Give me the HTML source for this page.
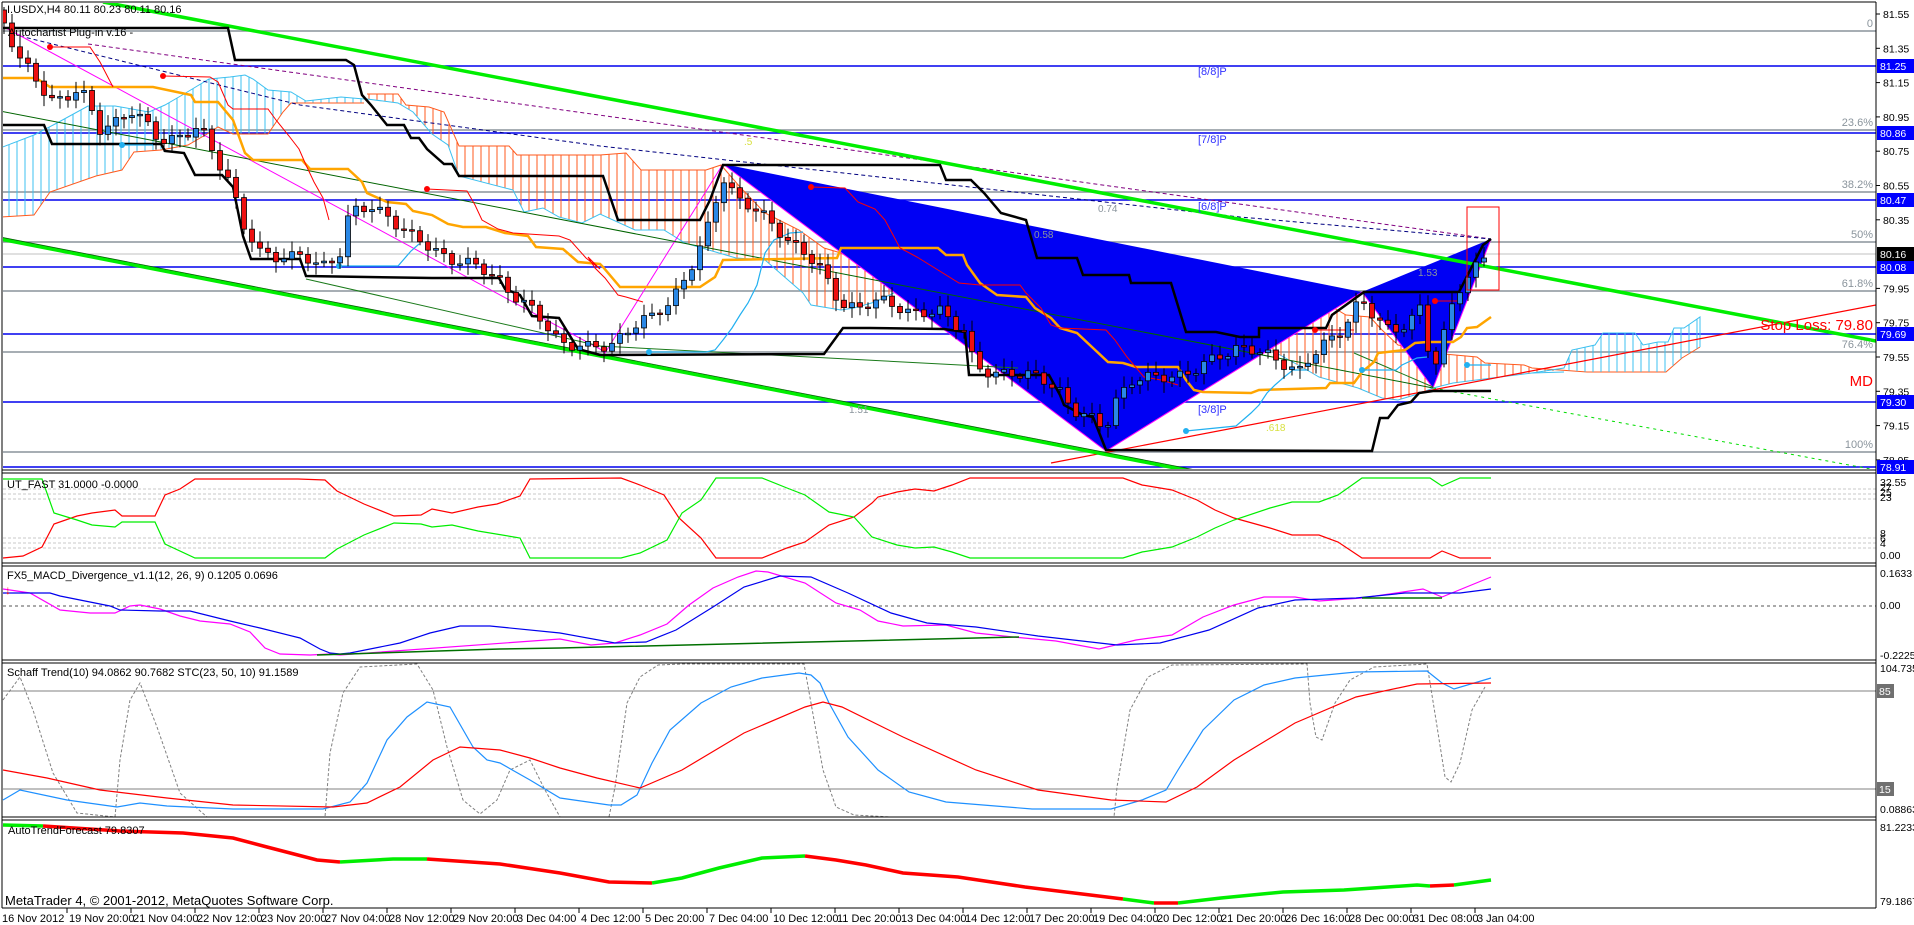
<!DOCTYPE html>
<html><head><meta charset="utf-8"><style>
html,body{margin:0;padding:0;background:#fff;}
svg{display:block;font-family:"Liberation Sans",sans-serif;}
</style></head><body>
<svg id="c" width="1914" height="925" viewBox="0 0 1914 925" xmlns="http://www.w3.org/2000/svg">
<defs>
<pattern id="ho" width="8" height="8" patternUnits="userSpaceOnUse"><line x1="1" y1="0" x2="1" y2="8" stroke="#ff5a1e" stroke-width="1"/></pattern>
<pattern id="hc" width="8" height="8" patternUnits="userSpaceOnUse"><line x1="1" y1="0" x2="1" y2="8" stroke="#3cc0f0" stroke-width="1"/></pattern>
<clipPath id="main"><rect x="3" y="3" width="1873" height="466"/></clipPath>
</defs>
<rect width="1914" height="925" fill="#fff"/>
<g clip-path="url(#main)">
<g stroke="#8a949c" stroke-width="1.5">
<line x1="3" y1="31" x2="1876" y2="31"/><line x1="3" y1="130" x2="1876" y2="130"/><line x1="3" y1="192" x2="1876" y2="192"/><line x1="3" y1="242" x2="1876" y2="242"/><line x1="3" y1="291" x2="1876" y2="291"/><line x1="3" y1="352" x2="1876" y2="352"/><line x1="3" y1="452" x2="1876" y2="452"/>
</g>
<line x1="3" y1="254" x2="1876" y2="254" stroke="#c0c0c0" stroke-width="1"/>
<g stroke="#0000ee" stroke-width="1.5">
<line x1="3" y1="66" x2="1876" y2="66"/><line x1="3" y1="133" x2="1876" y2="133"/><line x1="3" y1="200" x2="1876" y2="200"/><line x1="3" y1="267" x2="1876" y2="267"/><line x1="3" y1="334" x2="1876" y2="334"/><line x1="3" y1="402" x2="1876" y2="402"/><line x1="3" y1="467" x2="1876" y2="467"/>
</g>
<polygon fill="url(#hc)" stroke="none" points="0,148 34,135 57,123 88,106 115,106 149,112 165,105 184,94 209,79 230,77 245,75 253,79 268,90 291,92 306,101 341,97 364,99 364,103 291,103 283,112 268,134 233,134 218,127 207,134 188,145 161,150 134,152 122,170 96,176 50,192 34,215 0,217"/>
<polyline fill="none" stroke="#3cc0f0" stroke-width="1" points="0,148 34,135 57,123 88,106 115,106 149,112 165,105 184,94 209,79 230,77 245,75 253,79 268,90 291,92 306,101 341,97 364,99"/>
<polyline fill="none" stroke="#ff5a1e" stroke-width="1" points="0,217 34,215 50,192 96,176 122,170 134,152 161,150 188,145 207,134 218,127 233,134 268,134 283,112 291,103 364,103"/>
<polygon fill="url(#ho)" points="367,94 398,94 406,105 429,107 444,112 459,146 509,146 517,155 600,155 626,153 641,170 706,170 721,165 740,187 765,213 799,230 824,248 841,253 854,260 866,267 925,267 900,290 875,302 854,308 841,310 811,305 803,293 765,260 736,258 685,243 664,230 635,230 600,214 582,223 559,217 543,208 524,212 513,190 459,176 448,145 432,134 413,112 398,103 367,99"/>
<polyline fill="none" stroke="#ff5a1e" stroke-width="1" points="367,94 398,94 406,105 429,107 444,112 459,146 509,146 517,155 600,155 626,153 641,170 706,170 721,165 740,187 765,213 799,230 824,248 841,253 854,260 866,267 925,267"/>
<polyline fill="none" stroke="#3cc0f0" stroke-width="1" points="367,99 398,103 413,112 432,134 448,145 459,176 513,190 524,212 543,208 559,217 582,223 600,214 635,230 664,230 685,243 736,258 765,260 803,293 811,305 841,310 854,308 875,302 900,290 929,260"/>
<polygon fill="url(#hc)" points="929,260 950,240 959,233 984,230 1001,230 1026,240 1051,247 1068,248 1081,258 1081,260 929,260"/>
<polyline fill="none" stroke="#3cc0f0" stroke-width="1" points="929,260 950,240 959,233 984,230 1001,230 1026,240 1051,247 1068,248 1081,258 1093,267 1127,277 1169,283 1180,307 1190,313 1220,317 1240,327 1251,333 1263,343 1271,350 1307,370 1319,377 1358,388 1382,398 1398,400 1421,393 1433,388 1453,383 1492,378 1532,373 1564,372"/>
<polygon fill="url(#ho)" points="1081,260 1171,260 1180,272 1259,272 1275,287 1299,290 1315,308 1334,308 1346,315 1370,317 1382,330 1398,345 1410,347 1433,353 1477,357 1485,363 1524,365 1532,368 1564,370 1532,373 1492,378 1453,383 1433,388 1421,393 1398,400 1382,398 1358,388 1319,377 1307,370 1271,350 1263,343 1251,333 1240,327 1220,317 1190,313 1180,307 1169,283 1127,277 1093,267"/>
<polyline fill="none" stroke="#ff5a1e" stroke-width="1" points="866,267 925,267 1081,260 1171,260 1180,272 1259,272 1275,287 1299,290 1315,308 1334,308 1346,315 1370,317 1382,330 1398,345 1410,347 1433,353 1477,357 1485,363 1524,365 1532,368 1587,372 1666,372 1682,358 1700,347"/>
<polygon fill="url(#hc)" points="1564,368 1572,350 1595,345 1603,333 1635,333 1643,345 1658,342 1668,342 1674,328 1684,328 1700,317 1700,347 1682,358 1666,372 1587,372 1564,370"/>
<polyline fill="none" stroke="#3cc0f0" stroke-width="1" points="1532,373 1564,368 1572,350 1595,345 1603,333 1635,333 1643,345 1658,342 1668,342 1674,328 1684,328 1700,317 1700,347"/>
<polygon fill="#0000f4" points="723,164 1362,292 1106,451"/>
<polygon fill="#0000f4" points="1362,292 1491,239 1433,388"/>
<polyline fill="none" stroke="#ff00ff" stroke-width="1" points="723,164 1106,451 1362,292 1433,388 1491,239"/>
<polyline fill="none" stroke="#800080" stroke-width="1" stroke-dasharray="4,3" points="88,44 1491,239"/>
<polyline fill="none" stroke="#000080" stroke-width="1" stroke-dasharray="4,3" points="20,36 300,105 600,146 1240,217 1491,239"/>
<polyline fill="none" stroke="#ff00ff" stroke-width="1" points="4,27 600,349 605,353 723,164"/>
<polyline fill="none" stroke="#006400" stroke-width="1" points="0,111 1433,388"/>
<polyline fill="none" stroke="#00dd00" stroke-width="1" stroke-dasharray="3,4" points="1433,388 1876,470"/>
<polyline fill="none" stroke="#1a7a1a" stroke-width="1" points="306,279 600,346 1018,368"/>
<polyline fill="none" stroke="#1a7a1a" stroke-width="1" points="1354,353 1433,387"/>
<line x1="1051" y1="463" x2="1876" y2="305" stroke="#ff0000" stroke-width="1.2"/>
<line x1="103" y1="2" x2="1876" y2="341" stroke="#00ee00" stroke-width="3.5"/>
<line x1="0" y1="239" x2="1211" y2="475" stroke="#00ee00" stroke-width="3.5"/>
<line x1="0" y1="237" x2="1211" y2="473" stroke="#006000" stroke-width="0.8"/>
<polyline fill="none" stroke="#ffa500" stroke-width="2.5" points="0,78 36,78 50,87 153,87 191,95 195,102 218,102 233,120 245,153 253,160 302,160 310,169 348,169 362,182 367,193 387,202 406,204 413,211 432,215 448,224 463,227 486,227 505,233 528,236 536,247 563,249 578,262 600,264 603,267 620,287 700,287 715,277 723,260 837,258 841,248 938,248 946,255 963,255 967,265 980,283 997,295 1026,297 1035,308 1051,318 1060,328 1077,333 1093,348 1108,362 1123,363 1136,367 1178,367 1186,380 1194,390 1203,392 1251,393 1259,390 1326,388 1330,383 1354,383 1362,372 1374,362 1378,353 1405,350 1415,343 1427,342 1453,342 1461,337 1467,328 1477,327 1491,317"/>
<polyline fill="none" stroke="#000" stroke-width="2.5" points="0,125 44,125 52,144 161,144 165,151 184,153 195,175 222,175 233,187 243,236 251,259 300,259 306,276 432,278 499,278 505,289 520,295 532,316 559,318 578,349 600,355 824,354 843,328 870,328 944,329 965,332 969,375 1049,375 1060,395 1064,405 1083,415 1093,417 1106,450 1372,451 1380,418 1388,418 1398,405 1411,402 1419,393 1433,391 1491,391"/>
<polyline fill="none" stroke="#000" stroke-width="2.5" points="0,28 228,28 235,60 346,60 354,65 362,95 371,105 387,125 404,125 411,138 419,138 427,149 444,164 452,164 459,176 600,176 603,176 618,220 700,220 710,200 723,165 940,165 946,180 971,180 984,193 1001,213 1026,220 1037,258 1077,258 1083,275 1129,275 1131,283 1171,283 1186,332 1216,332 1240,337 1259,337 1259,328 1326,328 1332,315 1364,292 1459,292 1483,245 1491,239"/>
<g fill="none" stroke="#ff0000" stroke-width="1">
<polyline points="50,47 90,47 100,62 113,87"/>
<polyline points="163,76 210,77 218,82 228,105 233,109 268,109 276,120 289,136 299,149 306,165 314,182 323,198 329,220"/>
<polyline points="427,189 467,191 475,205 482,220 498,229 513,233 559,236 570,240 586,258 600,269 588,257 595,268 605,278 618,295 626,297 643,302"/>
<polyline points="811,187 845,188 858,202 875,209 885,220 900,248 917,257 938,270 959,283 980,285 1020,285 1026,293 1041,308 1051,325 1060,328 1106,330 1115,340 1127,357 1144,377 1161,380 1178,385"/>
<polyline points="1315,330 1354,330"/><polyline points="1435,301 1459,301"/>
</g>
<g fill="#ff0000"><circle cx="50" cy="47" r="3"/><circle cx="163" cy="76" r="3"/><circle cx="427" cy="189" r="3"/><circle cx="811" cy="187" r="3"/><circle cx="1315" cy="330" r="3"/><circle cx="1435" cy="301" r="3"/></g>
<g fill="none" stroke="#22b0f0" stroke-width="1.2">
<polyline points="122,145 153,145"/>
<polyline points="339,266 398,266 411,251 419,244"/>
<polyline points="649,352 706,352 715,350 723,340 732,328 740,315 748,303 757,285 765,253 774,240 790,233 803,232"/>
<polyline points="1186,431 1236,426 1251,413 1259,405 1267,393 1275,385 1283,378 1293,370 1307,370"/>
<polyline points="1362,370 1396,370 1402,365 1417,358 1427,357"/>
<polyline points="1467,365 1491,365"/>
</g>
<g fill="#22b0f0"><circle cx="122" cy="145" r="3"/><circle cx="339" cy="266" r="3"/><circle cx="649" cy="352" r="3"/><circle cx="1186" cy="431" r="3"/><circle cx="1362" cy="370" r="3"/><circle cx="1467" cy="365" r="3"/></g>
<g id="candles"></g>
<rect x="1467" y="207" width="32" height="83" fill="none" stroke="#ff0000" stroke-width="1"/>
<g font-size="11" fill="#8a949c" text-anchor="end">
<text x="1873" y="27">0</text><text x="1873" y="126">23.6%</text><text x="1873" y="188">38.2%</text><text x="1873" y="238">50%</text><text x="1873" y="287">61.8%</text><text x="1873" y="348">76.4%</text><text x="1873" y="448">100%</text>
</g>
<g font-size="11" fill="#3030ff"><text x="1198" y="75">[8/8]P</text><text x="1198" y="143">[7/8]P</text><text x="1198" y="210">[6/8]P</text><text x="1198" y="413">[3/8]P</text></g>
<g font-size="10" fill="#8a949c"><text x="1098" y="212">0.74</text><text x="1034" y="238">0.58</text><text x="849" y="413">1.51</text><text x="1418" y="276">1.53</text></g>
<text x="744" y="145" font-size="10" fill="#d8e040">.5</text>
<text x="1266" y="431" font-size="10" fill="#d8e040">.618</text>
<text x="1873" y="330" font-size="15" fill="#ff0000" text-anchor="end">Stop Loss: 79.80</text>
<text x="1873" y="386" font-size="15" fill="#ff0000" text-anchor="end">MD</text>
</g>
<text x="7" y="13" font-size="11" fill="#000">I.USDX,H4  80.11 80.23 80.11 80.16</text>
<text x="8" y="36" font-size="11" fill="#000">Autochartist Plug-in v.16 -</text>

<g stroke="#c8c8c8" stroke-dasharray="3,2" stroke-width="1">
<line x1="3" y1="489" x2="1876" y2="489"/><line x1="3" y1="494" x2="1876" y2="494"/><line x1="3" y1="499" x2="1876" y2="499"/><line x1="3" y1="538" x2="1876" y2="538"/><line x1="3" y1="543" x2="1876" y2="543"/><line x1="3" y1="548" x2="1876" y2="548"/>
</g>
<polyline fill="none" stroke="#ff0000" stroke-width="1.2" points="3,558 23,556 42,547 54,524 77,516 92,513 115,510 122,516 155,516 165,495 180,489 195,479 298,479 325,480 337,491 364,504 394,516 421,515 432,509 452,513 478,507 497,504 520,496 530,479 621,478 640,485 664,495 679,518 701,538 716,558 762,558 787,548 805,542 829,525 854,517 872,503 878,497 897,492 915,489 934,491 952,485 970,478 1123,478 1142,485 1172,490 1197,500 1215,510 1234,518 1270,528 1292,535 1319,535 1338,542 1362,558 1430,558 1442,551 1460,558 1491,558"/>
<polyline fill="none" stroke="#00ee00" stroke-width="1.2" points="3,479 42,479 54,513 77,520 92,525 115,527 122,522 155,522 165,544 195,558 325,558 337,549 364,535 394,523 421,524 432,527 452,525 478,531 520,538 530,558 621,558 640,553 667,540 682,513 701,500 716,478 762,478 787,488 805,495 829,512 854,517 872,537 897,545 915,548 934,547 952,552 970,558 1123,558 1142,552 1172,547 1197,537 1215,528 1234,520 1270,508 1292,502 1319,502 1338,495 1362,478 1430,478 1442,486 1460,478 1491,478"/>
<text x="7" y="488" font-size="11">UT_FAST 31.0000 -0.0000</text>

<line x1="3" y1="606" x2="1876" y2="606" stroke="#555" stroke-dasharray="3,3"/>
<polyline fill="none" stroke="#ff00ff" stroke-width="1.2" points="3,589 10,590 30,593 60,610 90,613 115,613 130,606 140,605 160,609 180,616 200,621 230,624 250,632 265,648 280,654 310,655 330,654 340,655 560,639 591,645 615,643 640,635 667,624 689,605 713,588 738,577 756,571 768,572 805,583 836,603 860,610 878,621 903,626 946,625 976,633 1013,637 1056,641 1099,649 1136,640 1172,635 1203,617 1234,605 1264,597 1295,597 1319,601 1362,598 1423,589 1442,597 1491,577"/>
<polyline fill="none" stroke="#0000ee" stroke-width="1.2" points="3,593 50,593 60,596 110,606 120,610 160,611 190,611 230,621 260,628 300,638 320,649 330,653 340,654 350,653 400,643 430,633 460,626 490,626 560,633 615,643 646,642 676,630 713,607 744,587 780,576 811,577 848,593 891,613 927,623 976,627 1038,636 1117,645 1160,643 1209,630 1258,608 1295,600 1356,598 1405,593 1460,593 1491,589"/>
<polyline fill="none" stroke="#007000" stroke-width="1.5" points="317,655 500,649 560,648 1019,637"/>
<polyline fill="none" stroke="#007000" stroke-width="1.5" points="1362,598 1442,598"/>
<text x="7" y="579" font-size="11">FX5_MACD_Divergence_v1.1(12, 26, 9) 0.1205 0.0696</text>
<text x="5" y="594" font-size="12" fill="#ff0000">↓</text>

<line x1="3" y1="691" x2="1876" y2="691" stroke="#808080"/>
<line x1="3" y1="789" x2="1876" y2="789" stroke="#808080"/>
<polyline fill="none" stroke="#808080" stroke-width="1" stroke-dasharray="3,2" points="3,700 20,677 33,710 53,773 77,813 115,817 120,760 130,700 140,683 157,727 180,793 207,817 325,817 330,753 343,693 360,667 417,664 433,690 447,747 463,800 480,814 497,800 510,770 530,760 545,790 560,817 609,817 615,787 627,703 640,677 658,665 682,664 804,664 811,703 823,770 836,807 854,815 891,817 1114,817 1117,787 1130,710 1148,677 1172,665 1307,664 1310,703 1316,737 1322,740 1335,703 1350,680 1374,667 1427,664 1436,720 1445,777 1451,782 1460,763 1472,710 1485,687"/>
<polyline fill="none" stroke="#1e90ff" stroke-width="1.2" points="3,800 20,790 67,800 117,807 140,803 167,806 233,809 323,809 350,802 367,783 387,740 407,717 427,702 450,707 473,747 487,760 500,763 530,780 560,798 609,805 621,805 637,795 652,763 670,730 701,703 731,687 762,678 799,673 811,675 820,683 829,703 848,737 878,770 909,792 946,802 1032,809 1111,809 1142,800 1166,790 1178,770 1203,730 1234,700 1264,685 1295,678 1356,672 1427,671 1442,683 1454,689 1491,678"/>
<polyline fill="none" stroke="#ff0000" stroke-width="1.2" points="3,770 47,778 100,790 167,798 233,805 333,807 367,803 400,787 433,760 460,747 500,750 530,758 560,768 597,778 640,788 682,770 744,733 805,707 823,702 842,707 903,737 976,770 1038,790 1111,800 1166,802 1197,787 1234,760 1295,723 1356,697 1417,684 1491,683"/>
<text x="7" y="676" font-size="11">Schaff Trend(10) 94.0862 90.7682  STC(23, 50, 10) 91.1589</text>

<g fill="none" stroke-width="3.5">
<polyline stroke="#00ee00" points="3,825 43,826"/>
<polyline stroke="#ff0000" points="43,826 120,831 183,833 233,838 267,847 317,860 340,862"/>
<polyline stroke="#00ee00" points="340,862 393,859 427,859"/>
<polyline stroke="#ff0000" points="427,859 500,864 560,873 609,882 652,883"/>
<polyline stroke="#00ee00" points="652,883 682,878 719,868 762,858 805,856"/>
<polyline stroke="#ff0000" points="805,856 836,860 866,865 903,873 958,877 1025,887 1074,893 1123,899"/>
<polyline stroke="#00ee00" points="1123,899 1154,903"/>
<polyline stroke="#ff0000" points="1154,903 1178,903"/>
<polyline stroke="#00ee00" points="1178,903 1221,898 1283,892 1344,890 1417,885 1430,886"/>
<polyline stroke="#ff0000" points="1430,886 1454,885"/>
<polyline stroke="#00ee00" points="1454,885 1491,880"/>
</g>
<text x="8" y="834" font-size="11">AutoTrendForecast 79.8307</text>
<text x="5" y="905" font-size="13">MetaTrader 4, © 2001-2012, MetaQuotes Software Corp.</text>

<g stroke="#000" stroke-width="1" fill="none">
<line x1="2" y1="2" x2="1876" y2="2"/>
<line x1="2" y1="2" x2="2" y2="908"/>
<line x1="1876" y1="2" x2="1876" y2="908"/>
<line x1="2" y1="470" x2="1876" y2="470"/><line x1="2" y1="473" x2="1876" y2="473"/>
<line x1="2" y1="563" x2="1876" y2="563"/><line x1="2" y1="566" x2="1876" y2="566"/>
<line x1="2" y1="660" x2="1876" y2="660"/><line x1="2" y1="663" x2="1876" y2="663"/>
<line x1="2" y1="817" x2="1876" y2="817"/><line x1="2" y1="820" x2="1876" y2="820"/>
<line x1="2" y1="908" x2="1876" y2="908"/>
</g>
<g id="axis" font-size="10.5"></g>
<g id="dates" font-size="11"></g>
</svg>
<script>
(function(){
var NS="http://www.w3.org/2000/svg";
function el(t,a,p){var e=document.createElementNS(NS,t);for(var k in a)e.setAttribute(k,a[k]);p.appendChild(e);return e;}
var A=[[4,20],[20,60],[50,100],[80,90],[100,130],[130,110],[160,140],[200,130],[230,180],[245,230],[260,255],[300,255],[320,270],[340,250],[350,210],[370,210],[390,215],[410,235],[430,250],[460,260],[500,280],[520,300],[540,320],[560,340],[590,350],[610,345],[625,330],[650,320],[670,300],[690,270],[705,240],[723,175],[740,200],[760,215],[780,230],[800,250],[820,270],[840,300],[860,310],[880,300],[900,305],[920,318],[940,310],[965,330],[975,370],[990,375],[1010,370],[1040,380],[1060,390],[1075,410],[1090,420],[1105,430],[1115,400],[1130,380],[1150,380],[1170,375],[1200,370],[1220,355],[1240,345],[1260,355],[1280,360],[1300,370],[1320,350],[1340,330],[1360,300],[1375,320],[1390,330],[1410,320],[1420,310],[1433,375],[1445,330],[1455,290],[1465,280],[1475,270],[1483,260],[1491,255]];
function f(x){for(var i=1;i<A.length;i++){if(x<=A[i][0]){var a=A[i-1],b=A[i];return a[1]+(b[1]-a[1])*(x-a[0])/(b[0]-a[0]);}}return A[A.length-1][1];}
var g=document.getElementById('candles');var prev=f(0);
for(var x=4;x<=1491;x+=8){var i=(x-4)/8;var c=f(x)+Math.sin(i*1.7)*5+Math.cos(i*0.9)*3;var o=prev;prev=c;
var top=Math.min(o,c),bot=Math.max(o,c);if(bot-top<1.5)bot=top+1.5;
var hi=top-3-Math.abs(Math.sin(i*2.3))*8,lo=bot+3+Math.abs(Math.cos(i*1.3))*8;
el('line',{x1:x,y1:hi,x2:x,y2:lo,stroke:'#000','stroke-width':1},g);
el('rect',{x:x-2.5,y:top,width:5,height:bot-top,fill:(c<o?'#2a88e6':'#ee1010'),stroke:'#000','stroke-width':0.8},g);}
var ax=document.getElementById('axis');
var ticks=[81.55,81.35,81.15,80.95,80.75,80.55,80.35,79.95,79.75,79.55,79.35,79.15,78.95];
ticks.forEach(function(p){var y=14+(81.55-p)*171.5;el('line',{x1:1876,y1:y,x2:1880,y2:y,stroke:'#000'},ax);el('text',{x:1883,y:y+4},ax).textContent=p.toFixed(2);});
[[81.25,66],[80.86,133],[80.47,200],[80.08,267],[79.69,334],[79.30,402],[78.91,467]].forEach(function(b){el('rect',{x:1877,y:b[1]-7,width:37,height:14,fill:'#0000ff'},ax);el('text',{x:1880,y:b[1]+4,fill:'#fff'},ax).textContent=b[0].toFixed(2);});
el('rect',{x:1877,y:247,width:37,height:14,fill:'#000'},ax);el('text',{x:1880,y:258,fill:'#fff'},ax).textContent='80.16';
var L=[['32.55',486],['27',491],['25',496],['23',501],['8',537],['6',542],['4',547],['0.00',559],['0.1633',577],['0.00',609],['-0.2225',659],['104.735',672],['0.08863',813],['81.2233',831],['79.1867',905]];
L.forEach(function(l){el('text',{x:1880,y:l[1]},ax).textContent=l[0];});
el('rect',{x:1877,y:684,width:17,height:14,fill:'#707070'},ax);el('text',{x:1879,y:695,fill:'#fff'},ax).textContent='85';
el('rect',{x:1877,y:782,width:17,height:14,fill:'#707070'},ax);el('text',{x:1879,y:793,fill:'#fff'},ax).textContent='15';
var D=['16 Nov 2012','19 Nov 20:00','21 Nov 04:00','22 Nov 12:00','23 Nov 20:00','27 Nov 04:00','28 Nov 12:00','29 Nov 20:00','3 Dec 04:00','4 Dec 12:00','5 Dec 20:00','7 Dec 04:00','10 Dec 12:00','11 Dec 20:00','13 Dec 04:00','14 Dec 12:00','17 Dec 20:00','19 Dec 04:00','20 Dec 12:00','21 Dec 20:00','26 Dec 16:00','28 Dec 00:00','31 Dec 08:00','3 Jan 04:00'];
var dg=document.getElementById('dates');
D.forEach(function(d,k){var x=k==0?3:67+(k-1)*64;if(k>0)el('line',{x1:x,y1:908,x2:x,y2:913,stroke:'#000'},dg);el('text',{x:k==0?2:x+2,y:922},dg).textContent=d;});
})();
</script>
</body></html>
